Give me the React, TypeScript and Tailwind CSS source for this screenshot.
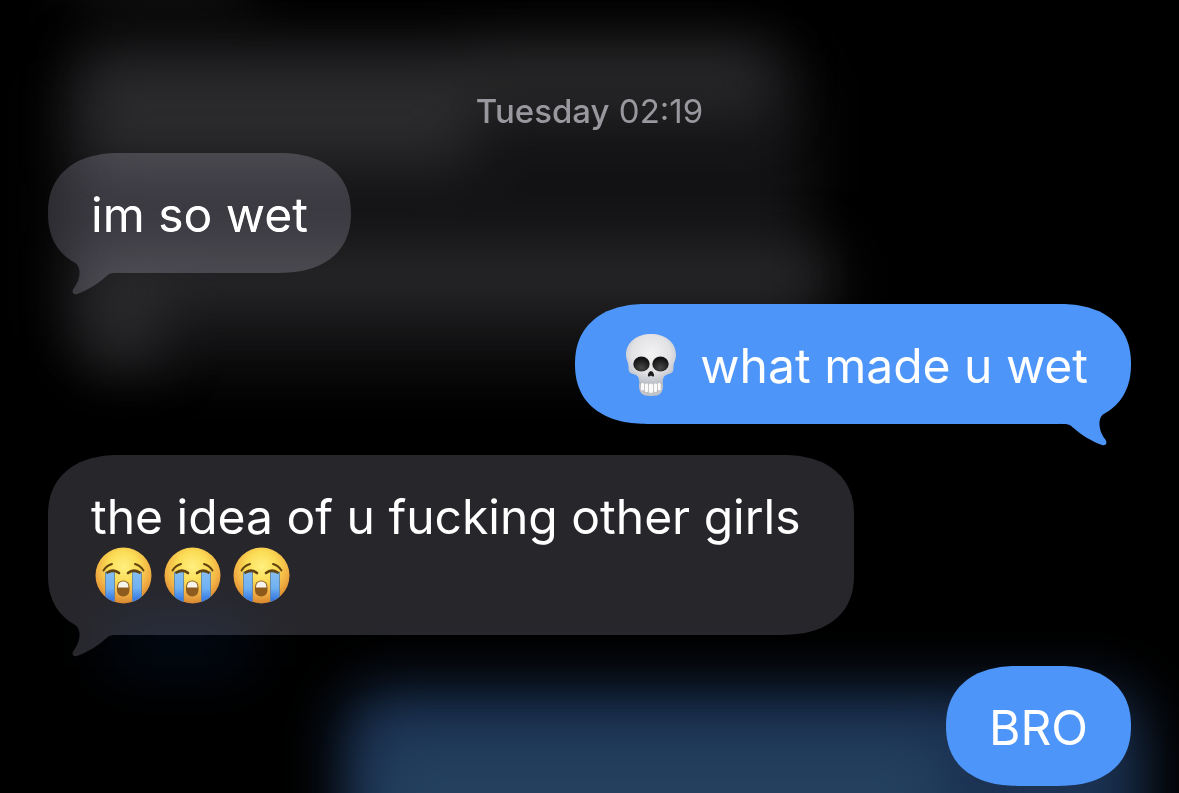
import type { ReactNode } from 'react'
import clsx from 'clsx'

type Message = {
  id: number
  from: 'me' | 'them'
  tail: boolean
  body: ReactNode
}

const messages: Message[] = [
  { id: 1, from: 'them', tail: true, body: 'im so wet' },
  { id: 2, from: 'me', tail: true, body: <><Skull /> what made u wet</> },
  {
    id: 3,
    from: 'them',
    tail: true,
    body: <>the idea of u fucking other girls <Sob id="a" /><Sob id="b" /><Sob id="c" /></>,
  },
  { id: 4, from: 'me', tail: false, body: 'BRO' },
]

function Skull() {
  return (
    <svg role="img" aria-label="skull" viewBox="0 0 57 64" className="-my-3.5 mr-2 ml-1 inline-block h-16 w-[57px] align-baseline">
      <defs>
        <radialGradient id="bone" cx="0.5" cy="0.4" r="0.65">
          <stop offset="0" stopColor="#f3f3f4" />
          <stop offset="0.6" stopColor="#e2e2e5" />
          <stop offset="1" stopColor="#b4b8c2" />
        </radialGradient>
        <radialGradient id="socket" cx="0.5" cy="0.75" r="0.6">
          <stop offset="0" stopColor="#484848" />
          <stop offset="1" stopColor="#141414" />
        </radialGradient>
      </defs>
      <path d="M18 45 L40 45 L41 52 C41 60 38 63 29 63 C20 63 17 60 17 52 Z" fill="#c3c4c8" />
      <path d="M29 1 C43 1 54 9 54 22 C54 27 51.500 29 51.500 34 C51.500 38 51 40 47 41 C42 42 41.500 44 40.500 49 C34 51 24 51 17.500 49 C16.500 44 16 42 11 41 C7 40 6.500 38 6.500 34 C6.500 29 4 27 4 22 C4 9 15 1 29 1 Z" fill="url(#bone)" />
      <ellipse cx="19.500" cy="31" rx="8.200" ry="7.600" fill="url(#socket)" />
      <ellipse cx="38.500" cy="31" rx="8.200" ry="7.600" fill="url(#socket)" />
      <path d="M29 38 C30.500 38 32.500 41 32 43 C31.500 44 30 43.500 29 42.500 C28 43.500 26.500 44 26 43 C25.500 41 27.500 38 29 38 Z" fill="#1c1c1e" />
      <path d="M18.500 50 Q29 52 39.500 50 L38.500 57 Q29 61 19.500 57 Z" fill="#a1a1a6" />
      <g fill="#fafafa">
        <rect x="19" y="50" width="3.200" height="7.500" rx="1.300" />
        <rect x="22.700" y="50.500" width="3.500" height="8.500" rx="1.300" />
        <rect x="26.700" y="50.800" width="4.400" height="9" rx="1.300" />
        <rect x="31.600" y="50.500" width="3.500" height="8.500" rx="1.300" />
        <rect x="35.600" y="50" width="3.200" height="7.500" rx="1.300" />
      </g>
    </svg>
  )
}

function Sob({ id }: { id: string }) {
  return (
    <svg role="img" aria-label="loudly crying face" viewBox="0 0 57 57" className="-my-2.5 mr-2 ml-1 inline-block size-[57px] align-baseline">
      <defs>
        <radialGradient id={`face-${id}`} cx="0.5" cy="0.34" r="0.68">
          <stop offset="0" stopColor="#fff080" />
          <stop offset="0.4" stopColor="#fbdc55" />
          <stop offset="0.7" stopColor="#f2b143" />
          <stop offset="1" stopColor="#d5802a" />
        </radialGradient>
        <linearGradient id={`tear-${id}`} x1="0" y1="0" x2="0" y2="1">
          <stop offset="0" stopColor="#86bdf0" />
          <stop offset="0.5" stopColor="#6fb0ef" />
          <stop offset="0.85" stopColor="#3a7be0" />
        </linearGradient>
        <clipPath id={`clip-${id}`}>
          <circle cx="28.500" cy="28.500" r="28" />
        </clipPath>
      </defs>
      <circle cx="28.500" cy="28.500" r="28" fill={`url(#face-${id})`} />
      <g clipPath={`url(#clip-${id})`}>
        <path d="M10.500 25 H19.500 V57 H10.500 Z" fill={`url(#tear-${id})`} stroke="#5b7fa0" strokeWidth="0.800" />
        <path d="M37.500 25 H46.500 V57 H37.500 Z" fill={`url(#tear-${id})`} stroke="#5b7fa0" strokeWidth="0.800" />
      </g>
      <g fill="none" stroke="#61430f" strokeLinecap="round">
        <path d="M8.500 23.500 Q11.500 18.500 17 17" strokeWidth="1.900" />
        <path d="M48.500 23.500 Q45.500 18.500 40 17" strokeWidth="1.900" />
        <path d="M12.500 25.500 Q18.500 21.500 24 26" strokeWidth="2.700" />
        <path d="M44.500 25.500 Q38.500 21.500 33 26" strokeWidth="2.700" />
      </g>
      <rect x="22" y="33.500" width="12.500" height="16" rx="6.200" fill="#8e5a1b" />
      <path d="M23 40.500 C23 36 25.500 34.500 28.200 34.500 C31 34.500 33.500 36 33.500 40.500 Z" fill="#f7f3ea" />
    </svg>
  )
}

function Tail({ mine }: { mine: boolean }) {
  return (
    <svg
      aria-hidden="true"
      viewBox="0 0 72 42"
      className={clsx(
        'absolute top-full -mt-5 h-[42px] w-[72px]',
        mine ? 'right-0 -scale-x-100 text-[#4d95f8]' : 'left-0 text-[#27262b]'
      )}
    >
      <path d="M19 2 C24 6 31 11 31.500 18 C32 25 29 31 26 35 C23 39 25 42 29 41 C40 37 49 31 55 26 C60 22 61 20 67 20 L70 20 L70 0 L22 0 Z" fill="currentColor" />
    </svg>
  )
}

function Bubble({ message }: { message: Message }) {
  const mine = message.from === 'me'
  return (
    <li
      className={clsx(
        'relative max-w-[806px] rounded-[72px_/_60px] px-[43px] pt-8 pb-7 text-5xl leading-[60px] text-white [corner-shape:superellipse(1.2)]',
        mine ? 'self-end bg-[#4d95f8]' : 'self-start bg-[#27262b] mix-blend-plus-lighter'
      )}
    >
      {message.tail && <Tail mine={mine} />}
      <p className="relative">{message.body}</p>
    </li>
  )
}

// Out-of-focus conversation glowing through behind the bubbles
function Backdrop() {
  return (
    <svg aria-hidden="true" viewBox="0 0 1179 793" preserveAspectRatio="none" className="absolute inset-0 size-full">
      <defs>
        <filter id="blur" filterUnits="userSpaceOnUse" x="-150" y="-150" width="1500" height="1200" colorInterpolationFilters="sRGB">
          <feGaussianBlur stdDeviation="28" />
        </filter>
      </defs>
      <g filter="url(#blur)">
        <rect x="60" y="40" width="750" height="330" rx="60" fill="#131315" />
        <rect x="70" y="-70" width="180" height="70" fill="#161618" />
      </g>
      <g filter="url(#blur)">
        <rect x="85" y="60" width="385" height="105" fill="#2b2b2d" />
        <rect x="470" y="50" width="300" height="65" fill="#29292b" />
        <rect x="85" y="252" width="745" height="50" fill="#2b2b2d" />
        <rect x="85" y="302" width="75" height="60" fill="#29292b" />
        <rect x="110" y="620" width="140" height="50" fill="#020b18" />
      </g>
      <g filter="url(#blur)">
        <rect x="343" y="690" width="800" height="240" rx="40" fill="#1b3253" />
      </g>
      <g filter="url(#blur)">
        <rect x="380" y="745" width="560" height="160" fill="#25415f" />
      </g>
    </svg>
  )
}

export default function App() {
  return (
    <main className="relative isolate min-h-screen overflow-hidden bg-black px-12 pt-[91px] pb-[7px] font-[Inter,'Liberation_Sans',sans-serif]">
      <Backdrop />
      <time className="relative block text-center text-[33px] leading-[40px] text-[#98989e]">
        <span className="font-medium">Tuesday</span> 02:19
      </time>
      <ul className="mt-[22px] flex flex-col gap-[31px]">
        {messages.map((message) => (
          <Bubble key={message.id} message={message} />
        ))}
      </ul>
    </main>
  )
}
